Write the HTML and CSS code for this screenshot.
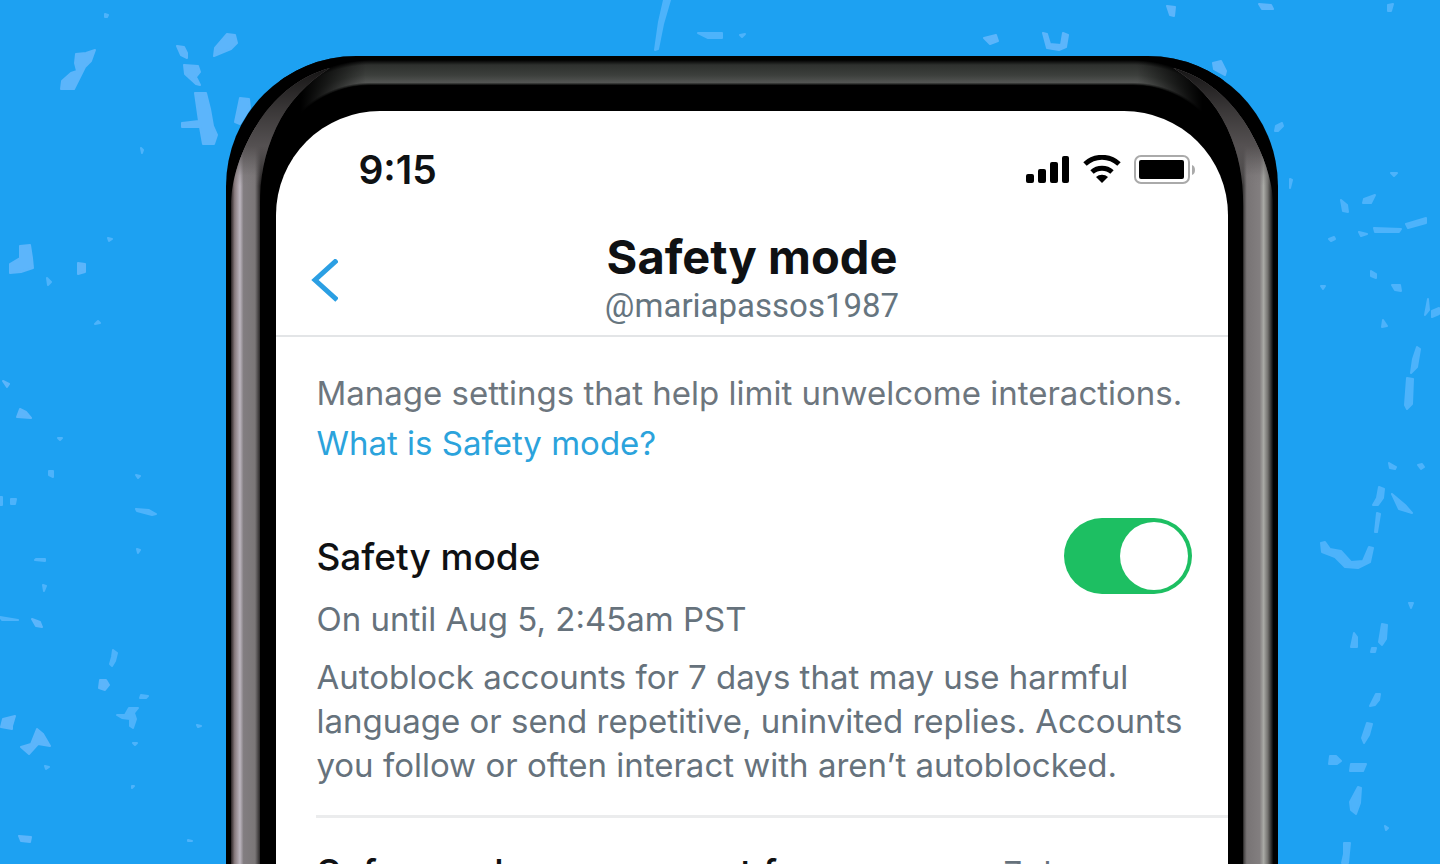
FILE: index.html
```
<!DOCTYPE html>
<html lang="en">

<head>
    <meta charset="UTF-8">
    <meta name="viewport" content="width=device-width, initial-scale=1.0">
    <title>Safety mode</title>
    <link rel="stylesheet" href="styles.css">
</head>

<body>
    <!-- Paint specks behind the phone -->
    <svg class="specks" viewBox="0 0 1440 864" preserveAspectRatio="xMidYMin slice" aria-hidden="true">
        <g class="big">
            <path d="M76 54l10-1 9-3-4 11-6 6-4 8-7 14-13 0 1-8 9-8 6-2-2-8z" />
            <path d="M227 34l8 1 2 8-6 6-17 7 1-8zM177 46l7 1 3 6 0 5-6-3zM184 65l14 1 2 6-4 5 4 8-4-1-11-10zM195 93l11 0 4 16 3 17 4 9-3 9-11 0-3-17-18 0 0-4 17-2zM240 98l9 1 1 9-10 16-5-2z" />
            <path d="M20 246l10-1 2 13 1 10-12 4-11 1 0-9 10-6zM78 263l7 1 0 8-7 2z" />
            <path d="M20 409l6 3 5 6-14-1zM3 381l6 3-2 3zM100 680l6 0 3 5-4 5-6-2zM37 729l6 5 7 12-12-2-9 10-8-7 10-3zM3 719l12-3-3 10 0 3-11-2zM19 836l12 1-1 5-9-1zM32 619l8 3 2 5-6-1z" />
            <path d="M1213 63l8-2 5 10-1 4-11-6zM1167 6l8 1-1 9-4-1zM1259 4l12 1 2 4-11 0z" />
            <path d="M984 38l12-3 2 6-8 3zM1043 33l4 1 3 10 11 1 2-12 5 2-2 12-7 3-12-2z" />
        </g>
        <g class="small">
            <path d="M664 0l6 0-7 24-5 25-3 1 4-28zM1341 200l6 5 1 7-5-1zM1364 199l11-4-4 8-8 0zM1374 228l27 1-2 3-24 0zM1406 224l20-6 0 5-18 5zM1359 232l8 2-6 2zM1371 271l5 3 0 4-5-2zM1392 285l8 0 1 6-6-1zM1428 299l1 11-4 5zM1432 311l7-3 0 6-7 3zM1417 347l3 2-3 18-6 6 2-14zM1407 378l6 1-1 25-5 5-2-4zM1276 126l6-3 1 3-5 5-3 0zM1391 173l6 0-3 3zM1329 239l5-2 1 2-4 2zM1321 286l4 0-2 3zM1383 320l4 6-5 1zM1290 179l2 1-2 8zM1388 5l5-1-2 7-3 0zM698 33l24 0 0 5-14 0zM740 35l5-1-3 3z" />
            <path d="M1321 543l4-1 5 7 11 2 10 11 12-1 6-14 4 1-3 14-12 6-13-1-10-10-13-5zM1379 487l5 2-1 9-5 7-5 0 4-7zM1377 513l3 1-3 18-2 0zM1392 494l13 11 7 8-13-4zM1389 463l7 4-1 2-5-1zM1418 465l4-1 2 3-3 2zM1409 603l4 0-2 5zM1382 624l5 1-1 14-4 6-3-3zM1354 633l3 4 0 10-6 0zM1372 648l4 0-1 4-4 0zM1376 694l4 0-1 6-4 5-5 1zM1367 723l5 1-3 11-5 8-2-5zM1330 756l6 0 5 5-4 3-8 0zM1351 764l15 0-3 7-13 0zM1358 787l3 1-1 15-4 11-5-4-1-8zM1344 843l6 0-2 20-6 0 2-9zM1385 826l3 2-2 2z" />
            <path d="M58 438l4 0-2 2zM49 471l4 0 0 6-4-2zM11 499l5 0-1 5-4 0zM0 497l2 0 0 8-2 0zM136 475l4 1-2 2zM136 509l13 1 7 4-4 1-15-4zM137 549l3 1-2 3zM36 559l9 0 0 2-10-1zM43 585l3 1-2 5zM0 617l18 3-16 0zM113 650l4 3-2 8-3 5-2-2 2-7zM117 715l8 0 4-7 9 0-4 5 2 6-3 9-3-2 0-7-8-1zM141 695l7 1-2 2-6 0zM133 743l4 0-2 2zM197 725l4 1-3 1zM45 766l4 1-3 2zM132 786l2 0-2 2zM188 840l4 1-4 0zM105 14l3 1-1 2-2 0zM98 321l2 2-5 1zM108 238l4 1-3 2zM141 148l2 2-1 3zM47 278l4 4-3 3z" />
        </g>
    </svg>

    <main class="phone">
        <svg class="rim" viewBox="0 0 1052 1600" aria-hidden="true">
            <defs>
                <linearGradient id="side-left" gradientUnits="userSpaceOnUse" x1="5" x2="35" y1="0" y2="0">
                    <stop offset="0" stop-color="#2a2324" />
                    <stop offset=".12" stop-color="#86797c" />
                    <stop offset=".3" stop-color="#bdb6bf" />
                    <stop offset=".42" stop-color="#827d80" />
                    <stop offset=".8" stop-color="#7b7778" />
                    <stop offset="1" stop-color="#1a1818" />
                </linearGradient>
                <linearGradient id="side-right" gradientUnits="userSpaceOnUse" x1="1018" x2="1048" y1="0" y2="0">
                    <stop offset="0" stop-color="#3b3939" />
                    <stop offset=".12" stop-color="#787475" />
                    <stop offset=".55" stop-color="#827e7f" />
                    <stop offset=".68" stop-color="#a9aaa5" />
                    <stop offset=".82" stop-color="#747370" />
                    <stop offset="1" stop-color="#050505" />
                </linearGradient>
                <linearGradient id="top-edge" gradientUnits="userSpaceOnUse" x1="0" x2="0" y1="4" y2="29">
                    <stop offset="0" stop-color="#000" />
                    <stop offset=".2" stop-color="#2e302e" />
                    <stop offset=".6" stop-color="#3c3f3c" />
                    <stop offset=".9" stop-color="#535553" />
                    <stop offset="1" stop-color="#0c0d0c" />
                </linearGradient>
                <!-- same shades as top-edge, bent round the corners -->
                <radialGradient id="bend-left" gradientUnits="userSpaceOnUse" cx="145" cy="129" r="125">
                    <stop offset=".8" stop-color="#0c0d0c" />
                    <stop offset=".82" stop-color="#535553" />
                    <stop offset=".88" stop-color="#3c3f3c" />
                    <stop offset=".96" stop-color="#2e302e" />
                    <stop offset="1" stop-color="#000" />
                </radialGradient>
                <radialGradient id="bend-right" href="#bend-left" cx="907" cy="129" />
                <linearGradient id="dim-left" gradientUnits="userSpaceOnUse" x1="75" x2="140" y1="0" y2="0">
                    <stop offset="0" stop-color="#000" />
                    <stop offset="1" stop-color="#000" stop-opacity="0" />
                </linearGradient>
                <linearGradient id="dim-right" href="#dim-left" x1="977" x2="912" />
                <linearGradient id="corner-fade" gradientUnits="userSpaceOnUse" x1="0" x2="0" y1="12" y2="120">
                    <stop offset="0" stop-color="#000" stop-opacity=".8" />
                    <stop offset=".4" stop-color="#000" stop-opacity=".45" />
                    <stop offset="1" stop-color="#000" stop-opacity="0" />
                </linearGradient>
                <linearGradient id="corner" gradientUnits="userSpaceOnUse" x1="0" x2="0" y1="90" y2="130">
                    <stop offset="0" stop-color="#6b6667" />
                    <stop offset="1" stop-color="#7b7778" stop-opacity="0" />
                </linearGradient>
            </defs>
            <path fill="url(#top-edge)" d="M144 4H908V29H144Z" />
            <path fill="url(#bend-left)" d="M145 4A125 125 0 0 0 57 41L74 58A100 100 0 0 1 145 29Z" />
            <path fill="url(#bend-right)" d="M907 4A125 125 0 0 1 995 41L978 58A100 100 0 0 0 907 29Z" />
            <path fill="url(#dim-left)" d="M50 0H145V29L60 70Z" />
            <path fill="url(#dim-right)" d="M1002 0H907V29L992 70Z" />
            <path fill="url(#side-left)" d="M5 1600V150C5 128 12 98 34 64C52 38 75 20 104 12C82 26 62 46 50 72C38 98 34 122 34 150V1600Z" />
            <path fill="url(#side-right)" d="M1048 1600V150C1048 128 1040 98 1018 64C1000 38 977 20 948 12C970 26 990 46 1002 72C1014 98 1018 122 1018 150V1600Z" />
            <path fill="url(#corner)" d="M5 150C5 128 12 98 34 64C52 38 75 20 104 12C82 26 62 46 50 72C38 98 34 122 34 150ZM1048 150C1048 128 1040 98 1018 64C1000 38 977 20 948 12C970 26 990 46 1002 72C1014 98 1018 122 1018 150Z" />
            <path fill="url(#corner-fade)" d="M5 150C5 128 12 98 34 64C52 38 75 20 104 12C82 26 62 46 50 72C38 98 34 122 34 150ZM1048 150C1048 128 1040 98 1018 64C1000 38 977 20 948 12C970 26 990 46 1002 72C1014 98 1018 122 1018 150Z" />
        </svg>

        <div class="screen">
            <div class="status-bar">
                <time>9:15</time>
                <div class="status-icons">
                    <svg width="44" height="28" viewBox="0 0 44 28" aria-label="Signal">
                        <rect x="0" y="19" width="8" height="9" rx="2" />
                        <rect x="12" y="14" width="8" height="14" rx="2" />
                        <rect x="24" y="7" width="8" height="21" rx="2" />
                        <rect x="36" y="1" width="7" height="27" rx="2" />
                    </svg>
                    <svg width="38" height="28" viewBox="0 0 38 28" aria-label="Wi-Fi">
                        <path d="M2 9a25 25 0 0 1 34 0M9 17a15 15 0 0 1 20 0" fill="none" stroke="#000" stroke-width="5" />
                        <path d="M13 22a9 9 0 0 1 12 0l-6 6z" />
                    </svg>
                    <svg width="61" height="30" viewBox="0 0 61 30" aria-label="Battery">
                        <rect x="1" y="2" width="54" height="27" rx="6" fill="none" stroke="#aaa" stroke-width="2" />
                        <rect x="5" y="6" width="45" height="19" rx="2" />
                        <path d="M58 11q3 1 3 5t-3 5z" fill="#aaa" />
                    </svg>
                </div>
            </div>

            <header>
                <button class="back" type="button" aria-label="Back">
                    <svg width="28" height="44" viewBox="0 0 28 44">
                        <path d="M27 1L5 21l22 20" fill="none" stroke="#2b9fe3" stroke-width="5" />
                    </svg>
                </button>
                <div class="heading">
                    <h1>Safety mode</h1>
                    <p class="handle">@mariapassos1987</p>
                </div>
            </header>

            <section class="intro">
                <p>Manage settings that help limit unwelcome interactions.</p>
                <a href="#">What is Safety mode?</a>
            </section>

            <section class="setting">
                <div class="setting-row">
                    <label for="safety">Safety mode</label>
                    <input type="checkbox" role="switch" id="safety" checked>
                </div>
                <p class="until">On until Aug 5, 2:45am PST</p>
                <p class="about">Autoblock accounts for 7 days that may use harmful language or send repetitive, uninvited replies. Accounts you follow or often interact with aren’t autoblocked.</p>
            </section>

            <section class="duration">
                <h2>Safeguard your account for</h2>
                <span>7 days</span>
            </section>
        </div>
    </main>
</body>

</html>
```

FILE: styles.css
```
* {
    margin: 0;
    padding: 0;
    box-sizing: border-box;
}

body {
    position: relative;
    height: 100vh;
    overflow: hidden;
    background: #1da1f2;
    font-family: Inter, "Liberation Sans", sans-serif;
    color: #0f1113;
}

.specks {
    position: absolute;
    inset: 0;
    width: 100%;
    height: 100%;
    stroke-width: 2;
    stroke-linejoin: round;
}

.big {
    fill: #5cb5fb;
    stroke: #5cb5fb;
}

.small {
    fill: #4db3fb;
    stroke: #4db3fb;
}

.phone {
    position: relative;
    width: 73%;
    min-height: 100vh;
    margin: 56px auto 0;
    left: 32px;
    padding: 55px 50px 0;
    overflow: hidden;
    background: #000;
    border-radius: 130px 130px 0 0;
}

.rim {
    position: absolute;
    top: 0;
    left: 0;
    width: 100%;
}

.screen {
    position: relative;
    min-height: 100vh;
    overflow: hidden;
    background: #fff;
    border-radius: 104px 104px 0 0;
}

.status-bar {
    display: flex;
    justify-content: space-between;
    align-items: center;
    height: 116px;
    padding: 0 33px 0 82px;
}

time {
    font-size: 39px;
    font-weight: 600;
}

.status-icons {
    display: flex;
    align-items: center;
    gap: 13px;
}

header {
    display: flex;
    align-items: center;
    height: 110px;
    padding: 0 34px;
    border-bottom: 2px solid #e3e5e7;
}

.back {
    display: flex;
    width: 28px;
    border: 0;
    background: none;
    cursor: pointer;
}

.heading {
    flex: 1;
    padding: 0 28px 4px 0;
    text-align: center;
}

h1 {
    font-size: 47px;
    font-weight: 700;
    line-height: 54px;
}

.handle {
    font-family: Roboto, sans-serif;
    font-size: 33px;
    line-height: 44px;
    color: #66757f;
}

.intro {
    padding: 31px 40px 0;
    font-size: 33px;
    line-height: 50px;
    color: #6d767e;
}

.intro p {
    white-space: nowrap;
}

a {
    color: #2ba3dc;
    text-decoration: none;
}

.setting {
    margin-left: 40px;
    padding-bottom: 28px;
    border-bottom: 3px solid #ebeced;
}

.setting-row {
    display: flex;
    justify-content: space-between;
    align-items: center;
    margin-top: 50px;
    padding-right: 36px;
}

label {
    font-size: 37px;
    font-weight: 500;
}

input {
    appearance: none;
    display: flex;
    justify-content: flex-end;
    width: 128px;
    height: 76px;
    padding: 4px;
    background: #1dbf62;
    border-radius: 38px;
}

input::before {
    content: "";
    width: 68px;
    height: 68px;
    background: #fff;
    border-radius: 50%;
}

.until {
    font-size: 33px;
    line-height: 50px;
    color: #66727c;
}

.about {
    margin-top: 11px;
    padding-right: 40px;
    font-size: 33px;
    line-height: 44px;
    color: #66727c;
}

.duration {
    display: flex;
    justify-content: space-between;
    align-items: center;
    padding: 32px 122px 0 40px;
}

h2 {
    font-size: 38px;
    font-weight: 500;
}

.duration span {
    font-size: 33px;
    color: #66727c;
}
```
